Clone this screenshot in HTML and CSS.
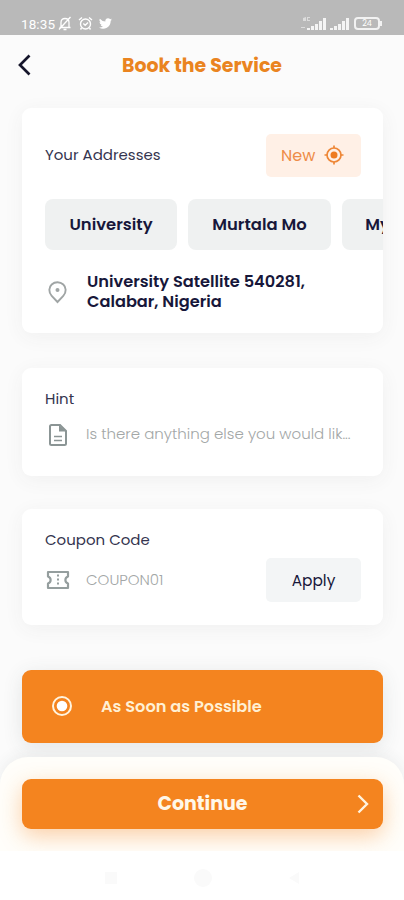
FILE: index.html
```html
<!DOCTYPE html>
<html lang="en">
<head>
    <meta charset="UTF-8">
    <meta name="viewport" content="width=device-width, initial-scale=1.0">
    <title>Book the Service</title>
    <link rel="stylesheet" href="styles.css">
</head>
<body>
    <!-- Status bar -->
    <div class="status-bar">
        <span class="clock">18:35</span>
        <svg class="status-mute" width="14" height="15" viewBox="0 0 14 15" fill="none" stroke="#fff" stroke-width="1.3">
            <path d="M3 11V6.500C3 4 4.500 2.500 7 2.500S11 4 11 6.500V11M1.500 11.500H12.500M5.500 13.500H8.500M1 13.500L12.500 1"/>
        </svg>
        <svg class="status-alarm" width="15" height="15" viewBox="0 0 15 15" fill="none" stroke="#fff" stroke-width="1.400">
            <circle cx="7.500" cy="8" r="5"/>
            <path d="M1 4L4 1.500M11 1.500L14 4M5.300 7.500L7.200 9.300L10 6.500M3.500 12L2.500 13.500M11.500 12L12.500 13.500"/>
        </svg>
        <svg class="status-bird" width="13" height="13" viewBox="0 0 24 24" fill="#fff">
            <path d="M24 4.600a10 10 0 0 1-2.800.8 5 5 0 0 0 2.200-2.700 10 10 0 0 1-3.100 1.200 4.900 4.900 0 0 0-8.400 4.500A14 14 0 0 1 1.700 3.100a4.900 4.900 0 0 0 1.500 6.600 5 5 0 0 1-2.200-.6 4.900 4.900 0 0 0 3.900 4.900 5 5 0 0 1-2.200.1 4.900 4.900 0 0 0 4.600 3.400A10 10 0 0 1 0 19.500a14 14 0 0 0 21.500-12.400A10 10 0 0 0 24 4.600z"/>
        </svg>
        <svg class="status-signal" width="50" height="15" viewBox="0 0 50 15" fill="#f4f4f4">
            <path d="M6 12h3v2H6zM10 10h3v4h-3zM14 8h3v6h-3zM18 5h3v9h-3zM22 2h3v12h-3z"/>
            <path d="M29 12h3v2h-3zM33 10h3v4h-3zM37 8h3v6h-3zM41 5h3v9h-3zM45 2h3v12h-3z"/>
            <path d="M2 2l3-1v4H2zM6 1h3v1H7v2h2v1H6zM0 11h4v1H0z" opacity=".6"/>
        </svg>
        <span class="battery">24</span>
        <i class="battery-tip"></i>
    </div>

    <!-- Page header -->
    <header class="header">
        <svg class="back" width="14" height="22" viewBox="0 0 14 22" fill="none" stroke="#15152a" stroke-width="2.700">
            <path d="M11.500 1.500L2 11L11.500 20.500"/>
        </svg>
        <h1 class="title">Book the Service</h1>
    </header>

    <main class="content">
        <!-- Addresses -->
        <section class="card card-address">
            <div class="card-head">
                <h2 class="label label-address">Your Addresses</h2>
                <button class="btn-new">
                    <span>New</span>
                    <svg width="20" height="20" viewBox="0 0 20 20" fill="none" stroke="#ee8636" stroke-width="1.700">
                        <circle cx="10" cy="10" r="7"/>
                        <circle cx="10" cy="10" r="3.500" fill="#ee7b20" stroke="none"/>
                        <path d="M10 0.500V3M10 17V19.500M0.500 10H3M17 10H19.500"/>
                    </svg>
                </button>
            </div>
            <div class="chips">
                <button class="chip chip-1">University</button>
                <button class="chip chip-2">Murtala Mo</button>
                <button class="chip chip-3">My</button>
            </div>
            <div class="address">
                <svg width="24" height="24" viewBox="0 0 24 24" fill="none" stroke="#a0a5a5" stroke-width="1.900">
                    <path d="M12.500 22L6.700 15.800C3.400 12.300 3.700 7.200 6.700 4.500C10 1.500 15 1.500 18.300 4.500C21.300 7.200 21.600 12.300 18.300 15.800Z"/>
                    <circle cx="12.500" cy="10" r="2" fill="#a0a5a5" stroke="none"/>
                </svg>
                <p class="address-text">University Satellite 540281,<br>Calabar, Nigeria</p>
            </div>
        </section>

        <!-- Hint -->
        <section class="card card-hint">
            <h2 class="label">Hint</h2>
            <div class="field">
                <svg width="26" height="24" viewBox="0 0 26 24" fill="none" stroke="#8b9595" stroke-width="2">
                    <path d="M6.500 2H15L21 8V20.500Q21 22 19.500 22H6.500Q5 22 5 20.500V3.500Q5 2 6.500 2Z"/>
                    <path d="M14 2V8.500H21Z" fill="#8b9595" stroke="none"/>
                    <path d="M9 13.500H17M9 17.500H17" stroke-width="1.700"/>
                </svg>
                <span class="placeholder hint-text">Is there anything else you would lik...</span>
            </div>
        </section>

        <!-- Coupon -->
        <section class="card card-coupon">
            <h2 class="label">Coupon Code</h2>
            <div class="field field-coupon">
                <svg width="26" height="20" viewBox="0 0 26 20" fill="none" stroke="#959e9e" stroke-width="2.200" stroke-linejoin="round">
                    <path d="M3 2H23V6.500C19.500 8 19.500 12 23 13.500V18H3V13.500C6.500 12 6.500 8 3 6.500Z"/>
                    <path d="M13 4.500V16" stroke-width="2" stroke-dasharray="2 2"/>
                </svg>
                <span class="placeholder">COUPON01</span>
                <button class="btn-apply">Apply</button>
            </div>
        </section>

        <!-- Booking time -->
        <button class="option">
            <svg width="22" height="22" viewBox="0 0 22 22" fill="none" stroke="#fff4df" stroke-width="2">
                <circle cx="11" cy="11" r="9"/>
                <circle cx="11" cy="11" r="5.300" fill="#fff" stroke="none"/>
            </svg>
            <span>As Soon as Possible</span>
        </button>
    </main>

    <footer class="bottom-sheet">
        <button class="btn-continue">
            <span>Continue</span>
            <svg class="next" width="12" height="20" viewBox="0 0 12 20" fill="none" stroke="#fff4df" stroke-width="2.400">
                <path d="M1.500 1.500L10 10L1.500 18.500"/>
            </svg>
        </button>
    </footer>

    <!-- System navigation -->
    <nav class="nav-bar">
        <i class="nav-recent"></i>
        <i class="nav-home"></i>
        <i class="nav-back"></i>
    </nav>
</body>
</html>
```

FILE: styles.css
```css
* {
    box-sizing: border-box;
}
body {
    margin: 0;
    height: 900px;
    overflow: hidden;
    display: flex;
    flex-direction: column;
    font-family: Poppins, Inter, sans-serif;
    background-color: #fbfbfb;
    color: #17173a;
}
button {
    padding: 0;
    border: none;
    font-family: inherit;
    color: inherit;
    white-space: nowrap;
}
svg {
    flex: none;
    display: block;
}
.status-bar {
    height: 35px;
    flex: none;
    display: flex;
    align-items: center;
    padding: 12px 22px 0 21px;
    background: #b9b9b9;
    color: #fff;
}
.clock {
    width: 37px;
    font-family: Roboto, sans-serif;
    font-size: 13.5px;
    letter-spacing: 0.1px;
}
.status-alarm {
    margin-left: 6px;
}
.status-bird {
    margin-left: 6px;
}
.status-signal {
    margin-left: auto;
}
.battery {
    width: 26px;
    height: 13px;
    margin-left: 3px;
    border: 2px solid #f2f2f2;
    border-radius: 4px;
    font-size: 8px;
    line-height: 9px;
    text-align: center;
}
.battery-tip {
    width: 2px;
    height: 5px;
    background: #f2f2f2;
}
.header {
    height: 73px;
    flex: none;
    display: flex;
    align-items: flex-start;
    padding: 19px 18px 0;
}
.title {
    flex: 1;
    margin: 0 14px 0 0;
    font-size: 18.9px;
    font-weight: 700;
    line-height: 23px;
    text-align: center;
    color: #ea8420;
}
.content {
    flex: none;
    height: 649px;
    padding: 0 21px 0 22px;
}
.card {
    background: #fff;
    border-radius: 9px;
    box-shadow: 0 4px 20px rgba(60, 70, 70, 0.06);
    overflow: hidden;
}
.card-address {
    height: 225px;
    padding-top: 26px;
}
.card-head {
    display: flex;
    justify-content: space-between;
    align-items: center;
    padding: 0 22px 0 23px;
}
.label {
    margin: 0;
    font-size: 15px;
    font-weight: 400;
    line-height: 20px;
    color: #35354f;
}
.label-address {
    padding-bottom: 2px;
}
.btn-new {
    width: 95px;
    height: 43px;
    display: flex;
    align-items: center;
    gap: 9px;
    padding: 0 0 1px 15px;
    border-radius: 5px;
    background: #fff0e6;
    color: #ee8c48;
    font-size: 16px;
}
.chips {
    display: flex;
    gap: 11px;
    margin: 22px 0 0 23px;
}
.chip {
    flex: none;
    height: 51px;
    border-radius: 8px;
    background: #eff1f1;
    font-size: 16.4px;
    font-weight: 600;
}
.chip-1 {
    width: 132px;
}
.chip-2 {
    width: 143px;
}
.chip-3 {
    width: 71px;
}
.address {
    display: flex;
    align-items: center;
    gap: 18px;
    margin: 22px 0 0 23px;
}
.address-text {
    margin: 0;
    font-size: 16.2px;
    font-weight: 600;
    line-height: 20px;
    white-space: nowrap;
}
.card-hint {
    height: 108px;
    margin-top: 35px;
    padding: 21px 22px 0 23px;
}
.field {
    display: flex;
    align-items: center;
    gap: 15px;
    margin-top: 13px;
}
.placeholder {
    padding-bottom: 2px;
    font-size: 15px;
    font-weight: 300;
    color: #a3a7a7;
    white-space: nowrap;
}
.hint-text {
    padding-bottom: 3px;
}
.card-coupon {
    height: 116px;
    margin-top: 33px;
    padding: 21px 22px 0 23px;
}
.field-coupon {
    margin-top: 8px;
}
.btn-apply {
    width: 95px;
    height: 44px;
    margin-left: auto;
    border-radius: 5px;
    background: #f3f5f6;
    font-size: 15.4px;
}
.option {
    width: 361px;
    height: 73px;
    display: flex;
    align-items: center;
    gap: 28px;
    margin-top: 45px;
    padding: 0 0 1px 29px;
    border-radius: 9px;
    background: #f4841f;
    box-shadow: 0 4px 20px rgba(60, 70, 70, 0.12);
    color: #fff0d4;
    font-size: 16.2px;
    font-weight: 600;
}
.bottom-sheet {
    height: 94px;
    flex: none;
    padding: 22px 21px 0 22px;
    border-radius: 28px 28px 0 0;
    background: #fffefa;
    box-shadow: 0 -3px 14px rgba(60, 70, 70, 0.07);
    overflow: hidden;
}
.btn-continue {
    width: 361px;
    height: 50px;
    display: flex;
    align-items: center;
    padding: 0 14px 1px 26px;
    border-radius: 9px;
    background: #f4841f;
    box-shadow: 0 7px 22px rgba(244, 132, 31, 0.38);
    color: #fff7e8;
    font-size: 19px;
    font-weight: 700;
}
.btn-continue span {
    flex: 1;
}
.nav-bar {
    height: 49px;
    flex: none;
    display: flex;
    align-items: center;
    padding: 4px 105px 0;
    justify-content: space-between;
    background: #fff;
}
.nav-recent {
    width: 12px;
    height: 12px;
    background: #fafafa;
}
.nav-home {
    width: 18px;
    height: 18px;
    border-radius: 50%;
    background: #fafafa;
}
.nav-back {
    border: 6px solid transparent;
    border-left: 0;
    border-right: 10px solid #fafafa;
}
```
